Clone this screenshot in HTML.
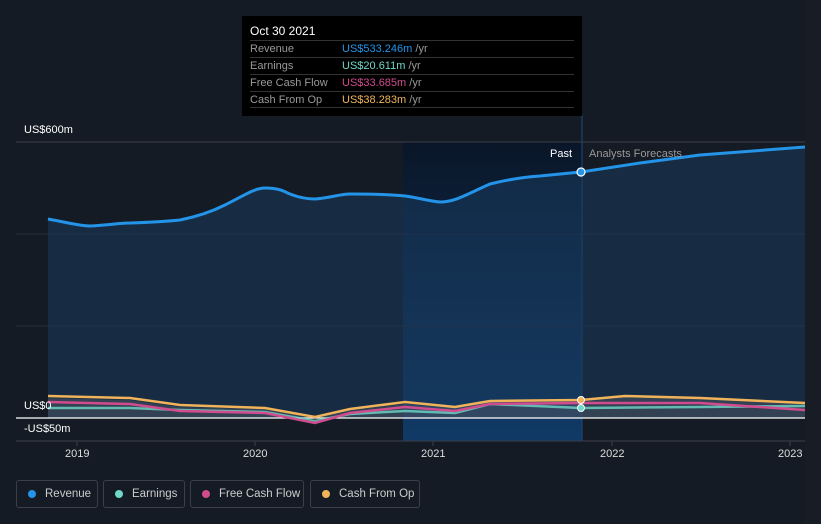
<!DOCTYPE html>
<html><head><meta charset="utf-8"><style>
*{margin:0;padding:0;box-sizing:border-box}
body{width:821px;height:524px;background:#151b24;font-family:"Liberation Sans",sans-serif;overflow:hidden;position:relative}
svg{position:absolute;left:0;top:0}
.tip{position:absolute;left:242px;top:16px;width:340px;height:100px;background:#000;padding:8px 8px 0 8px;font-size:11px}
.tip .h{color:#fff;font-size:12px;height:16px}
.tip .r{border-top:1px solid #333;height:17px;line-height:16px;color:#999;position:relative}
.tip .r span{position:absolute;left:92px}
.tip .r:last-child{border-bottom:1px solid #333}
.leg{position:absolute;top:480px;height:28px;border:1px solid #3a3f4a;border-radius:3px;color:#ccc;font-size:11.5px;line-height:26px;padding-left:28px;white-space:nowrap}
.leg i{position:absolute;left:11px;top:9px;width:8px;height:8px;border-radius:50%}
.lbl{position:absolute;color:#fff;font-size:11px}
.yr{position:absolute;top:448px;color:#ddd;font-size:11px}
</style></head><body>
<svg width="821" height="524">
<defs>
<linearGradient id="past" x1="0" y1="0" x2="0" y2="1"><stop offset="0" stop-color="#0a1628"/><stop offset="1" stop-color="#103a66"/></linearGradient>
</defs>
<rect x="805" y="0" width="16" height="524" fill="#181c24"/>
<rect x="403" y="142" width="179" height="299" fill="url(#past)"/>
<line x1="582" y1="115" x2="582" y2="441" stroke="#1b4a7a" stroke-width="1"/>
<line x1="16" y1="142" x2="805" y2="142" stroke="#3a3f4a"/>
<line x1="16" y1="234" x2="805" y2="234" stroke="#262c36"/>
<line x1="16" y1="326" x2="805" y2="326" stroke="#262c36"/>
<path d="M48,219 C70,223 80,226 90,226 C110,225 120,223 130,223 C160,222 170,221 180,220 C200,216 215,210 225,205 C245,195 255,188 265,188 C280,188 285,192 290,194 C300,198 308,199 315,199 C330,198 340,194 350,194 C380,194 395,195 405,196 C420,198 428,201 440,202 C455,202 465,195 490,184 C510,179 525,177 540,176 C560,174 570,173 581,172 L640,163 L700,155 L805,147 L805,418 L48,418 Z" fill="#1a3a5c" fill-opacity="0.55"/>
<path d="M48,398 L130,400 L180,407 L265,409 L315,418 L350,410 L405,404 L455,408 L490,401 L581,400 L625,396 L700,398 L805,403 L805,418 L48,418 Z" fill="#555c68" fill-opacity="0.45"/>
<line x1="16" y1="418" x2="805" y2="418" stroke="#fff" stroke-width="1.2"/>
<line x1="16" y1="441" x2="805" y2="441" stroke="#3a3f4a"/>
<path d="M48,219 C70,223 80,226 90,226 C110,225 120,223 130,223 C160,222 170,221 180,220 C200,216 215,210 225,205 C245,195 255,188 265,188 C280,188 285,192 290,194 C300,198 308,199 315,199 C330,198 340,194 350,194 C380,194 395,195 405,196 C420,198 428,201 440,202 C455,202 465,195 490,184 C510,179 525,177 540,176 C560,174 570,173 581,172 L640,163 L700,155 L805,147" fill="none" stroke="#2394e8" stroke-width="3"/>
<path d="M48,408 L130,408 L180,410 L265,412 L315,421 L350,414 L405,411 L455,413 L490,404 L581,408 L700,407 L805,406" fill="none" stroke="#6fd8c8" stroke-width="2.5" opacity="0.8"/>
<path d="M48,402 L130,404 L180,411 L265,413 L315,423 L350,413 L405,407 L455,411 L490,404 L581,403 L700,403 L805,410" fill="none" stroke="#d14b8f" stroke-width="2.5"/>
<path d="M48,396 L130,398 L180,405 L265,408 L315,417 L350,409 L405,402 L455,407 L490,401 L581,400 L625,396 L700,398 L805,403" fill="none" stroke="#f0b35a" stroke-width="2.5"/>
<circle cx="581" cy="172" r="4" fill="#2394e8" stroke="#fff" stroke-width="1.2"/>
<circle cx="581" cy="400" r="3.5" fill="#f0b35a" stroke="#fff" stroke-width="1"/>
<circle cx="581" cy="408" r="3.5" fill="#6fd8c8" stroke="#fff" stroke-width="1"/>
<g stroke="#3a3f4a"><line x1="77" y1="441" x2="77" y2="446"/><line x1="255" y1="441" x2="255" y2="446"/><line x1="433" y1="441" x2="433" y2="446"/><line x1="612" y1="441" x2="612" y2="446"/><line x1="790" y1="441" x2="790" y2="446"/></g>
</svg>
<div class="lbl" style="left:24px;top:124px">US$600m</div>
<div class="lbl" style="left:24px;top:400px">US$0</div>
<div class="lbl" style="left:24px;top:423px">-US$50m</div>
<div class="lbl" style="left:550px;top:148px">Past</div>
<div class="lbl" style="left:589px;top:148px;color:#999">Analysts Forecasts</div>
<div class="yr" style="left:65px">2019</div>
<div class="yr" style="left:243px">2020</div>
<div class="yr" style="left:421px">2021</div>
<div class="yr" style="left:600px">2022</div>
<div class="yr" style="left:778px">2023</div>
<div class="tip">
<div class="h">Oct 30 2021</div>
<div class="r">Revenue<span><b style="font-weight:normal;color:#2394e8">US$533.246m</b> /yr</span></div>
<div class="r">Earnings<span><b style="font-weight:normal;color:#6fd8c8">US$20.611m</b> /yr</span></div>
<div class="r">Free Cash Flow<span><b style="font-weight:normal;color:#d14b8f">US$33.685m</b> /yr</span></div>
<div class="r">Cash From Op<span><b style="font-weight:normal;color:#f0b35a">US$38.283m</b> /yr</span></div>
</div>
<div class="leg" style="left:16px;width:82px"><i style="background:#2394e8"></i>Revenue</div>
<div class="leg" style="left:103px;width:82px"><i style="background:#6fd8c8"></i>Earnings</div>
<div class="leg" style="left:190px;width:114px"><i style="background:#d14b8f"></i>Free Cash Flow</div>
<div class="leg" style="left:310px;width:110px"><i style="background:#f0b35a"></i>Cash From Op</div>
</body></html>
